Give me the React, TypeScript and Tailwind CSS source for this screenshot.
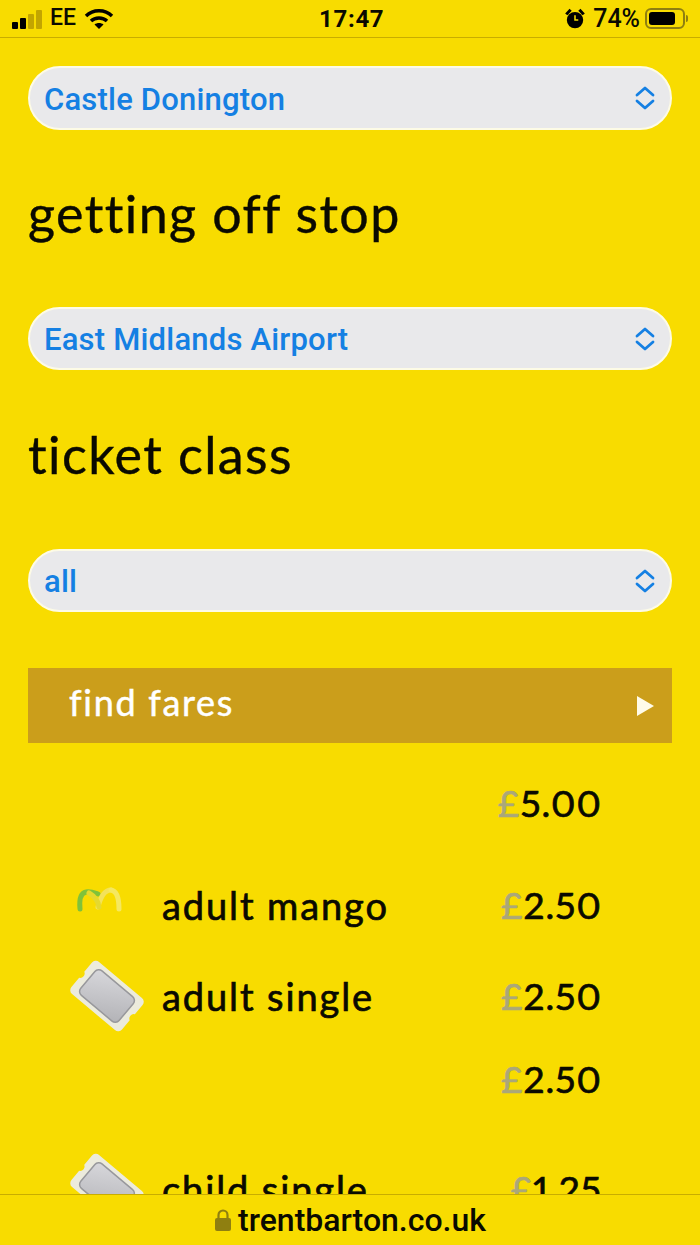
import React from 'react';

const SANS = 'font-["Lato","Noto_Sans",sans-serif]';
const THICK = '[-webkit-text-stroke:0.7px_#0a0a00]';

const Chevrons = () => (
  <svg width="22" height="26" viewBox="0 0 22 26" fill="none" stroke="#1580e3" strokeWidth="2.8" strokeLinecap="round" strokeLinejoin="round">
    <path d="M3 10 L11 3 L19 10" />
    <path d="M3 16 L11 23 L19 16" />
  </svg>
);

const Select = ({ value, tall }: { value: string; tall?: boolean }) => (
  <div className={`mx-7 ${tall ? 'h-16' : 'h-[63px]'} rounded-full bg-[#e9e9eb] border-2 border-[#fdfbe6] flex items-center justify-between pl-[14px] pr-[14px]`}>
    <span className={`pt-1 text-[31px] text-[#1580e3] font-medium font-["Roboto",sans-serif] tracking-[0.2px]`}>{value}</span>
    <Chevrons />
  </div>
);

const Heading = ({ children, className }: { children: React.ReactNode; className: string }) => (
  <h2 className={`mx-7 text-[52px] leading-[60px] text-[#0a0a00] tracking-[1.4px] [-webkit-text-stroke:0.4px_#0a0a00] ${SANS} ${className}`}>{children}</h2>
);

const Ticket = () => (
  <svg width="78" height="78" viewBox="0 0 78 78">
    <defs>
      <linearGradient id="ticketFill" x1="0" y1="0" x2="1" y2="1">
        <stop offset="0" stopColor="#d8d8dc" />
        <stop offset="1" stopColor="#b2b2b6" />
      </linearGradient>
    </defs>
    <g transform="rotate(40 39 39)">
      <path d="M11 18 H67 a5 5 0 0 1 5 5 V35 a4.500 4.500 0 0 0 0 8 V55 a5 5 0 0 1 -5 5 H11 a5 5 0 0 1 -5 -5 V43 a4.500 4.500 0 0 0 0 -8 V23 a5 5 0 0 1 5 -5 Z" fill="#ecebdc" />
      <rect x="14" y="23" width="50" height="32" rx="5" fill="url(#ticketFill)" stroke="#98989c" strokeWidth="1.500" />
    </g>
  </svg>
);

const Mango = () => (
  <svg className="-translate-x-2 -translate-y-1.5 blur-[0.6px]" width="50" height="28" viewBox="0 0 50 28" fill="none" strokeWidth="5" strokeLinecap="round">
    <path d="M6 24 C5 14 7 8 12 7 C16 6 21 8 24 9" stroke="#7fc23a" />
    <path d="M24 22 C26 14 30 5 37 5" stroke="#f3e25a" />
    <path d="M37 5 C43 6 45 14 45 24" stroke="#f5e860" />
    <path d="M15 8 C20 11 24 15 25 22" stroke="#e5d92e" />
  </svg>
);

const Price = ({ value, className }: { value: string; className?: string }) => (
  <span className={`text-[37px] tracking-[1.1px] proportional-nums text-[#0a0a00] ${THICK} ${SANS} ${className ?? ''}`}>
    <span className="text-[#aaa77a] [-webkit-text-stroke:0.7px_#aaa77a]">£</span>
    {value}
  </span>
);

const FareRow = ({ icon, label, price, className }: { icon?: React.ReactNode; label?: string; price: string; className: string }) => (
  <div className={`flex items-center pl-[68px] pr-[98px] ${className}`}>
    <div className="w-[78px] h-[78px] flex items-center justify-center shrink-0">{icon}</div>
    <span className={`ml-4 text-[38px] tracking-[1.9px] text-[#0a0a00] ${THICK} ${SANS}`}>{label}</span>
    <Price value={price} className="ml-auto" />
  </div>
);

const StatusBar = () => (
  <div className={`h-[38px] border-b border-[#c9ad00] flex items-center relative px-3 font-["Roboto",sans-serif] text-[#0a0a00]`}>
    <div className="flex items-end gap-[2px] h-5">
      <span className="w-[6px] h-[7px] bg-black rounded-[1px]" />
      <span className="w-[6px] h-[11px] bg-black rounded-[1px]" />
      <span className="w-[6px] h-[15px] bg-[#c2a500] rounded-[1px]" />
      <span className="w-[6px] h-[19px] bg-[#c2a500] rounded-[1px]" />
    </div>
    <span className="ml-[8px] text-[23px] font-medium">EE</span>
    <svg className="ml-[8px]" width="30" height="22" viewBox="0 0 30 22" fill="none" stroke="#000" strokeWidth="3.400">
      <path d="M2 8 C9 1 21 1 28 8" />
      <path d="M7 13 C11 9 19 9 23 13" />
      <path d="M15 21 L10.500 16.500 C13 14.500 17 14.500 19.500 16.500 Z" fill="#000" stroke="none" />
    </svg>
    <span className="absolute left-[319px] text-[24px] font-bold tracking-[0.7px]">17:47</span>
    <div className="ml-auto flex items-center">
      <svg width="22" height="24" viewBox="0 0 20 22">
        <circle cx="10" cy="12" r="7.500" fill="#000" />
        <path d="M1 6 L5 1.500 L7 3.500 L3 7.500 Z M19 6 L15 1.500 L13 3.500 L17 7.500 Z" fill="#000" />
        <path d="M10 7.500 V12 H13" stroke="#f8dc00" strokeWidth="1.400" fill="none" />
      </svg>
      <span className="ml-[7px] text-[25px] font-medium">74%</span>
      <div className="ml-[5px] w-[40px] h-[21px] rounded-[6px] border-2 border-[#8f7f10] p-[2px]">
        <div className="w-[26px] h-full bg-black rounded-[3px]" />
      </div>
      <span className="ml-[1px] w-[2px] h-[7px] bg-[#8f7f10] rounded-r" />
    </div>
  </div>
);

export default function App() {
  return (
    <div className="relative w-[700px] h-[1245px] overflow-hidden bg-[#f8dc00]">
      <StatusBar />
      <div className="pt-7">
        <Select value="Castle Donington" tall />
        <Heading className="mt-[53px]">getting off stop</Heading>
        <div className="mt-[64px]">
          <Select value="East Midlands Airport" />
        </div>
        <Heading className="mt-[54px]">ticket class</Heading>
        <div className="mt-[65px]">
          <Select value="all" />
        </div>
        <button className="mt-14 ml-7 w-[644px] h-[75px] bg-[#cb9e1b] flex items-center justify-between pl-[41px] pr-[18px] text-white">
          <span className={`pb-2 text-[36px] tracking-[1.700px] [-webkit-text-stroke:0.5px_#ffffff] ${SANS}`}>find fares</span>
          <svg width="18" height="22" viewBox="0 0 18 22"><path d="M1 1 L18 11 L1 21 Z" fill="#fffbe8" /></svg>
        </button>
        <div className="flex justify-end pr-[98px] mt-[37px] h-[46px] items-center">
          <Price value="5.00" />
        </div>
        <FareRow icon={<Mango />} label="adult mango" price="2.50" className="mt-[40px] h-[78px]" />
        <FareRow icon={<Ticket />} label="adult single" price="2.50" className="mt-[13px] h-[78px]" />
        <div className="flex justify-end pr-[98px] mt-[21px] h-[46px] items-center">
          <Price value="2.50" />
        </div>
        <FareRow icon={<Ticket />} label="child single" price="1.25" className="mt-[48px] h-[78px]" />
      </div>
      <div className="absolute left-0 right-0 bottom-0 h-[51px] bg-[#f8dc00] border-t border-[#c9ad00] flex items-center justify-center gap-[6px]">
        <svg width="18" height="24" viewBox="0 0 18 24">
          <path d="M4.500 11 V7 a4.500 4.500 0 0 1 9 0 V11" fill="none" stroke="#8f7f10" strokeWidth="2.200" />
          <rect x="1" y="10" width="16" height="13" rx="2" fill="#8f7f10" />
        </svg>
        <span className={`text-[32px] font-medium text-[#0a0a00] font-["Roboto",sans-serif]`}>trentbarton.co.uk</span>
      </div>
    </div>
  );
}
